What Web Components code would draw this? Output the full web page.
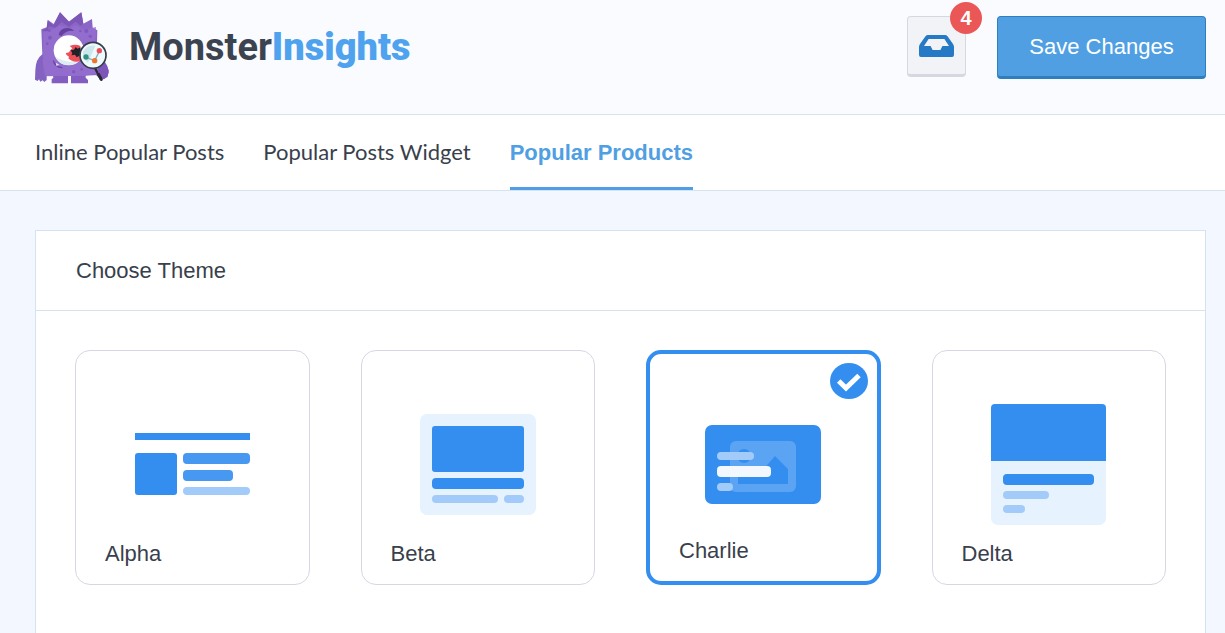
<!DOCTYPE html>
<html lang="en">
<head>
<meta charset="utf-8">
<meta name="viewport" content="width=device-width, initial-scale=1">
<title>MonsterInsights - Popular Products</title>
<style>
  :root {
    --blue: #509fe2;
    --blue-dark: #2e7fbe;
    --theme: #338eef;
    --line: #d6e2ed;
    --ink: #393f4c;
  }
  body {
    margin: 0;
    background: #f3f7ff;
    color: var(--ink);
    font: 22px/24px "Liberation Sans", Arial, sans-serif;
  }
</style>
</head>
<body>
<mi-app>
  <mi-header slot="header"></mi-header>
  <mi-tabs slot="tabs">
    <mi-tab href="#inline">Inline Popular Posts</mi-tab>
    <mi-tab href="#widget">Popular Posts Widget</mi-tab>
    <mi-tab href="#products" active>Popular Products</mi-tab>
  </mi-tabs>
  <mi-panel>
    <span slot="title">Choose Theme</span>
    <mi-theme-picker></mi-theme-picker>
  </mi-panel>
</mi-app>

<script>
function define(name, html, setup) {
  const template = document.createElement('template');
  template.innerHTML = html;
  customElements.define(name, class extends HTMLElement {
    constructor() {
      super();
      this.attachShadow({ mode: 'open' }).append(template.content.cloneNode(true));
    }
    connectedCallback() {
      if (setup) setup(this, this.shadowRoot);
    }
  });
}

define('mi-app', `
  <style>
    :host { display: flex; flex-direction: column; min-height: 100vh; }
    main { flex: 1; display: flex; padding: 39px 19px 0 35px; }
    ::slotted(mi-panel) { flex: 1; }
  </style>
  <slot name="header"></slot>
  <slot name="tabs"></slot>
  <main><slot></slot></main>
`);

define('mi-logo', `
  <style>
    :host { display: flex; gap: 20px; }
    svg { display: block; width: 74px; height: 72px; }
    .name {
      font: bold 38px/70px Roboto, sans-serif;
      color: #3c4350;
    }
    b { color: #4ea2ee; }
  </style>
  <svg viewBox="30 35 222 216" aria-hidden="true">
    <path d="M52 162Q32 176 31 210l-1 28 8 4 4-5 4 7 7-4 5 5 7-6V162Z" fill="#8462c2"/>
    <path d="M212 165q34 16 39 46l-3 18-12 8-16-6-18-18Z" fill="#7a54b8"/>
    <path d="M82 216h47v33H80v-12l5-5ZM138 216h44v16l7 7v10h-51Z" fill="#835dc0"/>
    <path d="M49 87l16-6 3-23 18 13 19-35 27 28 37-28 6 34 26-14 2 26 14 8-2 70 6 64-64 3H62l-8-12Z" fill="#8a66c6"/>
    <path d="M105 36l27 28 37-28 6 34-8 6-15-12-20 15-22-14-19 17-20-5-3 16-18-2 15-6 3-23 18 13Z" fill="#7c57b7"/>
    <path d="M55 96q34-7 49-21l28 9 23-9 20 13 38-8v30l-8 26 8 84-32 6-119 2-8-40Z" fill="#9470cf" opacity=".75"/>
    <path d="M101 104q3-20 25-21 15 0 21 9-21-4-38 15Z" fill="#6540a0"/>
    <g fill="#8059bc">
      <circle cx="75" cy="112" r="6"/><circle cx="67" cy="130" r="4"/>
      <circle cx="184" cy="92" r="6"/><circle cx="196" cy="108" r="5"/>
      <circle cx="166" cy="92" r="4"/><circle cx="73" cy="91" r="4"/>
      <circle cx="146" cy="214" r="5"/><circle cx="170" cy="207" r="4"/>
    </g>
    <circle cx="131" cy="150" r="45" fill="#fff"/>
    <path d="M91 168q11 27 40 26 22 0 35-19-24 13-43 7-20-3-32-14Z" fill="#dbecf2"/>
    <path d="M166 137q-14-7-32 0l8 7q-8 6-10 12l-10 3q2 8 10 10l-2 5q13 14 36 9Z" fill="#ed5059"/>
    <path d="M166 141l-8 4-6-5-5 8-10 2 5 9-3 6 11-2 5 8 7-4 7 3Z" fill="#20222a"/>
    <path d="M85 181q5 20 27 21" fill="none" stroke="#6843a5" stroke-width="4"/>
    <path d="M93 187l1 10 9-4Z" fill="#e5dcf7"/>
    <path d="M211 205l16 31" stroke="#292936" stroke-width="7" stroke-linecap="round"/>
    <circle cx="204" cy="165" r="39" fill="#eef9fb" stroke="#353c4a" stroke-width="5"/>
    <path d="M174 154q12-22 37-18l-22 51q-16-12-15-33Z" fill="#cce6ed"/>
    <path d="M183 171l26 10 15-30" fill="none" stroke="#84afc0" stroke-width="4"/>
    <circle cx="183" cy="170" r="8" fill="#32917f"/>
    <circle cx="209" cy="181" r="8" fill="#ed762e"/>
    <circle cx="223" cy="151" r="8" fill="#ea4c59"/>
    <path d="M234 194q18 4 17 24l-13 17-20-16Z" fill="#7d55b8"/>
    <path d="M221 222l8 15" stroke="#292936" stroke-width="9" stroke-linecap="round"/>
  </svg>
  <span class="name">Monster<b>Insights</b></span>
`);

define('mi-inbox-button', `
  <style>
    :host { display: block; position: relative; }
    button {
      display: flex; align-items: center; justify-content: center;
      box-sizing: border-box; width: 59px; height: 61px; padding: 0;
      background: #f1f3f7; border: 1px solid #d5d8e1; border-bottom-width: 3px;
      border-radius: 4px; cursor: pointer;
    }
    svg { display: block; width: 35px; height: 22px; }
    .badge {
      position: absolute; top: -14px; right: -16px;
      width: 32px; height: 32px; border-radius: 50%;
      background: #eb5757; color: #fff; text-align: center;
      font-size: 20px; line-height: 32px; font-weight: bold; pointer-events: none;
    }
  </style>
  <button type="button" aria-label="Notifications">
    <svg viewBox="0 0 35 22" aria-hidden="true">
      <path fill="#2679c5" fill-rule="evenodd" d="M9 0h17q1.500 0 2.500 1.200L34 9q1 1.400 1 3v8q0 2-2 2H2q-2 0-2-2v-8q0-1.600 1-3l5.500-7.800Q7.500 0 9 0ZM9.600 4 5 11h6.600l2 4h7.800l2-4H30L25.400 4Z"/>
    </svg>
  </button>
  <span class="badge"><slot></slot></span>
`);

define('mi-header', `
  <style>
    :host { display: block; background: #fafbff; border-bottom: 1px solid var(--line); }
    header {
      display: flex; align-items: flex-start; justify-content: space-between;
      box-sizing: border-box; min-height: 114px; padding: 12px 19px 0 35px;
    }
    .actions { display: flex; gap: 31px; padding-top: 4px; }
    .save {
      box-sizing: border-box; min-width: 209px; height: 63px; padding: 0 24px;
      color: #fff; background: var(--blue); border: 1px solid var(--blue-dark);
      border-bottom-width: 3px; border-radius: 4px; font: inherit; cursor: pointer;
    }
  </style>
  <header>
    <mi-logo></mi-logo>
    <div class="actions">
      <mi-inbox-button>4</mi-inbox-button>
      <button class="save" type="button">Save Changes</button>
    </div>
  </header>
`);

define('mi-tabs', `
  <style>
    :host { display: block; background: #fff; border-bottom: 1px solid var(--line); }
    nav { display: flex; gap: 39px; padding: 0 35px; }
  </style>
  <nav><slot></slot></nav>
`);

define('mi-tab', `
  <style>
    :host { display: block; }
    a {
      display: block; padding: 25px 0 23px; border-bottom: 3px solid transparent;
      color: inherit; text-decoration: none; font-family: Lato, sans-serif; white-space: nowrap;
    }
    :host([active]) a {
      padding: 26px 0 22px; color: var(--blue); border-color: var(--blue);
      font-family: inherit; font-weight: bold;
    }
  </style>
  <a><slot></slot></a>
`, (host, root) => {
  const link = root.querySelector('a');
  link.href = host.getAttribute('href');
  if (host.hasAttribute('active')) link.setAttribute('aria-current', 'page');
});

define('mi-panel', `
  <style>
    :host { display: block; background: #fff; border: 1px solid var(--line); border-bottom: 0; }
    h2 {
      margin: 0; padding: 28px 40px 27px; border-bottom: 1px solid var(--line);
      font: inherit;
    }
    .body { padding: 39px 39px 47px; }
  </style>
  <h2><slot name="title"></slot></h2>
  <div class="body"><slot></slot></div>
`);

const ART = {
  alpha: `<svg viewBox="0 0 115 63" width="115" height="63">
    <path fill="#338eef" d="M0 0h115v7H0z"/>
    <rect y="20" width="42" height="42" rx="3" fill="#338eef"/>
    <rect x="48" y="20" width="67" height="11" rx="4" fill="#4798f1"/>
    <rect x="48" y="37" width="50" height="11" rx="4" fill="#4798f1"/>
    <rect x="48" y="54" width="67" height="8" rx="4" fill="#a2cbf9"/></svg>`,
  beta: `<svg viewBox="0 0 116 101" width="116" height="101">
    <rect width="116" height="101" rx="7" fill="#e6f2fd"/>
    <rect x="12" y="12" width="92" height="46" rx="3" fill="#338eef"/>
    <rect x="12" y="64" width="92" height="11" rx="4" fill="#338eef"/>
    <rect x="12" y="81" width="66" height="8" rx="4" fill="#a2cbf9"/>
    <rect x="84" y="81" width="20" height="8" rx="4" fill="#a2cbf9"/></svg>`,
  charlie: `<svg viewBox="0 0 116 79" width="116" height="79">
    <rect width="116" height="79" rx="7" fill="#338eef"/>
    <rect x="25" y="16" width="66" height="51" rx="6" fill="#5ba4f3"/>
    <circle cx="39" cy="31" r="7" fill="#338eef"/>
    <path d="M33 59V48l10-6 14 4 13-15 13 13v15Z" fill="#338eef"/>
    <rect x="12" y="27" width="37" height="8" rx="4" fill="#a2cbf9"/>
    <rect x="12" y="41" width="54" height="11" rx="4" fill="#f3f8ff"/>
    <rect x="12" y="58" width="16" height="8" rx="4" fill="#a2cbf9"/></svg>`,
  delta: `<svg viewBox="0 0 115 121" width="115" height="121">
    <rect width="115" height="121" rx="7" fill="#e6f2fd"/>
    <path d="M0 57V4q0-4 4-4h107q4 0 4 4v53Z" fill="#338eef"/>
    <rect x="12" y="70" width="91" height="11" rx="4" fill="#338eef"/>
    <rect x="12" y="87" width="46" height="8" rx="4" fill="#a2cbf9"/>
    <rect x="12" y="101" width="22" height="8" rx="4" fill="#a2cbf9"/></svg>`
};

define('mi-theme-art', `
  <style>
    :host { display: block; }
  </style>
`, (host, root) => {
  root.innerHTML += ART[host.getAttribute('name')];
  root.querySelector('svg').style.display = 'block';
});

const card = (id, label, checked = '') => `
  <label>
    <input type="radio" name="theme" value="${id}" ${checked}>
    <mi-theme-art name="${id}"></mi-theme-art>
    <span>${label}</span>
    <svg class="check" viewBox="0 0 38 36" aria-hidden="true">
      <ellipse cx="19" cy="18" rx="19" ry="18" fill="#338eef"/>
      <path d="M8.700 18l7.300 7L29 12.500" fill="none" stroke="#fff" stroke-width="5"/>
    </svg>
  </label>`;

define('mi-theme-picker', `
  <style>
    :host { display: block; }
    .grid { display: grid; grid-template-columns: repeat(4, minmax(0, 1fr)); gap: 51px; }
    label {
      position: relative; display: grid; box-sizing: border-box; min-height: 235px;
      border: 1px solid #d5d8e4; border-radius: 15px; cursor: pointer;
    }
    label:has(:checked) { border: 4px solid var(--theme); }
    input { position: absolute; inset: 0; margin: 0; appearance: none; cursor: pointer; outline: none; }
    label:has(:focus-visible) { box-shadow: 0 0 0 3px #b4d6fa; }
    mi-theme-art, span { grid-area: 1 / 1; }
    mi-theme-art { place-self: center; padding-bottom: 6px; }
    span { align-self: end; padding: 0 29px 18px; }
    .check { display: none; position: absolute; top: 9px; right: 9px; width: 38px; height: 36px; }
    :checked ~ .check { display: block; }
  </style>
  <div class="grid" role="radiogroup" aria-label="Theme">
    ${card('alpha', 'Alpha')}
    ${card('beta', 'Beta')}
    ${card('charlie', 'Charlie', 'checked')}
    ${card('delta', 'Delta')}
  </div>
`);
</script>
</body>
</html>
